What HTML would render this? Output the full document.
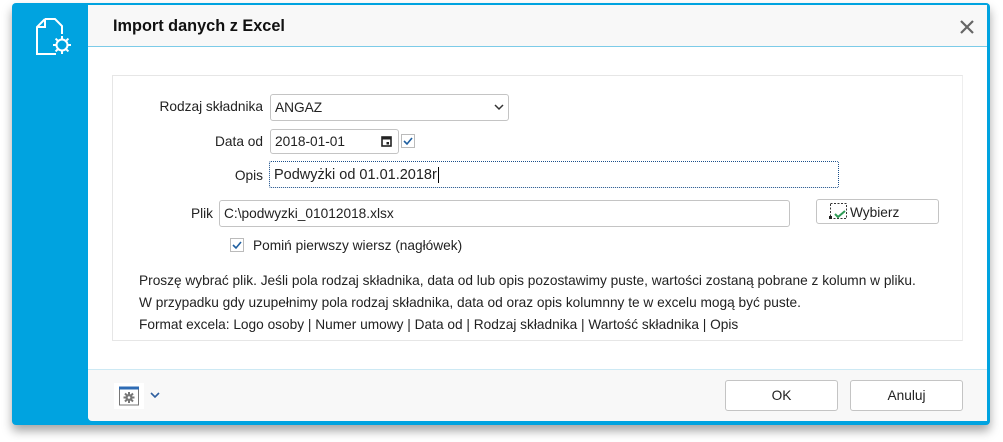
<!DOCTYPE html>
<html><head><meta charset="utf-8"><style>
body{margin:0;width:1003px;height:442px;background:#fff;position:relative;overflow:hidden;font-family:"Liberation Sans",Arial,sans-serif;font-size:13.7px;color:#222}
.abs{position:absolute}
.frame{left:12px;top:3px;width:978px;height:422px;background:#00a3e0;border-radius:4px;box-shadow:0 6px 10px rgba(0,0,0,.35)}
.main{left:88px;top:5px;width:899px;height:415px;background:#fff;border-radius:3px 0 0 3px}
.title{left:88px;top:5px;width:899px;height:41px;background:#f8f8f8;border-bottom:1px solid #7ccbe8}
.title span{position:absolute;left:25px;top:12px;font-size:16.3px;font-weight:bold;color:#111}
.panel{left:112px;top:75px;width:849px;height:264px;border:1px solid #e6e6e6;border-right:1px solid #eee}
.footer{left:88px;top:369px;width:899px;height:51px;background:#f8f8f8;border-top:1px solid #cde9f4;border-radius:0 0 0 4px}
.lbl{text-align:right;width:150px}
.inp{border:1px solid #c4c4c4;border-radius:3px;background:#fff;height:25px;box-sizing:border-box;padding:5px 4px;line-height:14px}
.btn{border:1px solid #c4c4c4;border-radius:3px;background:#fff;box-sizing:border-box;text-align:center}
</style></head><body>
<div class="abs frame"></div>
<div class="abs main"></div>
<div class="abs title"><span>Import danych z Excel</span></div>
<svg class="abs" style="left:36px;top:18px" width="36" height="38" viewBox="0 0 36 38" fill="none" stroke="#fff" stroke-width="2"><path d="M9 1H19L26 8V16M9 1L1 9V36H20M1 9H9V1"/><circle cx="26" cy="27" r="5.5"/><path d="M26 18v3M26 33v3M17 27h3M32 27h3M19.6 20.6l2 2M30.4 31.4l2 2M19.6 33.4l2-2M30.4 22.6l2-2"/></svg>
<svg class="abs" style="left:960px;top:20px" width="14" height="14" viewBox="0 0 14 14" stroke="#666" stroke-width="2.2"><path d="M1 1L13 13M13 1L1 13"/></svg>
<div class="abs panel"></div>
<div class="abs lbl" style="left:113px;top:99px">Rodzaj składnika</div>
<div class="abs inp" style="left:270px;top:94px;width:239px;height:27px;padding-top:6px">ANGAZ</div>
<svg class="abs" style="left:494px;top:104px" width="10" height="7"><path d="M1 1L5 5L9 1" stroke="#333" stroke-width="1.5" fill="none"/></svg>
<div class="abs lbl" style="left:113px;top:134px">Data od</div>
<div class="abs inp" style="left:270px;top:129px;width:129px">2018-01-01</div>
<svg class="abs" style="left:381px;top:135px" width="11" height="12"><rect x="1" y="2" width="9" height="9" fill="none" stroke="#222" stroke-width="1.6"/><rect x="1" y="2" width="9" height="2.5" fill="#222"/><rect x="5.5" y="7" width="2.5" height="2.5" fill="#222"/></svg>
<div class="abs" style="left:401px;top:134px;width:14px;height:14px;border:1px solid #bbb;box-sizing:border-box;background:#fff"></div>
<svg class="abs" style="left:402px;top:135px" width="12" height="12"><path d="M2 6L5 9L10 3" stroke="#1f5fa0" stroke-width="1.6" fill="none"/></svg>
<div class="abs lbl" style="left:113px;top:168px">Opis</div>
<div class="abs inp" style="left:269px;top:161px;width:570px;height:27px;border:1px dotted #1b4f8a;border-radius:2px;padding:6px 4px;font-size:14.5px">Podwyżki od 01.01.2018r<span style="border-left:1px solid #000;margin-left:1px"></span></div>
<div class="abs lbl" style="left:63px;top:206px;width:150px">Plik</div>
<div class="abs inp" style="left:219px;top:200px;width:571px;height:27px;padding-top:6px">C:\podwyzki_01012018.xlsx</div>
<div class="abs btn" style="left:816px;top:199px;width:123px;height:25px"></div>
<svg class="abs" style="left:829px;top:202px" width="20" height="18"><rect x="1.5" y="1.5" width="16" height="15" fill="none" stroke="#333" stroke-dasharray="2 1.5"/><rect x="0" y="14" width="3" height="3" fill="#222"/><path d="M6 12L9 15L16 9" stroke="#2e9a55" stroke-width="2" fill="none"/></svg>
<div class="abs" style="left:850px;top:205px">Wybierz</div>
<div class="abs" style="left:230px;top:238px;width:14px;height:14px;border:1px solid #bbb;box-sizing:border-box"></div>
<svg class="abs" style="left:231px;top:239px" width="12" height="12"><path d="M2 6L5 9L10 3" stroke="#1f5fa0" stroke-width="1.6" fill="none"/></svg>
<div class="abs" style="left:253px;top:238px">Pomiń pierwszy wiersz (nagłówek)</div>
<div class="abs" style="left:139px;top:270px;line-height:22px">Proszę wybrać plik. Jeśli pola rodzaj składnika, data od lub opis pozostawimy puste, wartości zostaną pobrane z kolumn w pliku.<br>W przypadku gdy uzupełnimy pola rodzaj składnika, data od oraz opis kolumnny te w excelu mogą być puste.<br>Format excela: Logo osoby | Numer umowy | Data od | Rodzaj składnika | Wartość składnika | Opis</div>
<div class="abs footer"></div>
<div class="abs" style="left:114px;top:383px;width:30px;height:26px;background:#fff"></div>
<svg class="abs" style="left:119px;top:386px" width="20" height="20"><rect x="0.5" y="1" width="19" height="18" fill="#fff" stroke="#777"/><rect x="0" y="0.5" width="20" height="3" fill="#2f6cb5"/><circle cx="10" cy="11.5" r="3.5" fill="#777"/><path d="M10 6v11M4.5 11.5h11M6 7.5l8 8M14 7.5l-8 8" stroke="#777" stroke-width="2"/><circle cx="10" cy="11.5" r="1.3" fill="#fff"/></svg>
<svg class="abs" style="left:150px;top:392px" width="10" height="7"><path d="M1 1L5 5L9 1" stroke="#2f5f9f" stroke-width="1.6" fill="none"/></svg>
<div class="abs btn" style="left:725px;top:380px;width:113px;height:31px;line-height:29px">OK</div>
<div class="abs btn" style="left:850px;top:380px;width:113px;height:31px;line-height:29px">Anuluj</div>
</body></html>
